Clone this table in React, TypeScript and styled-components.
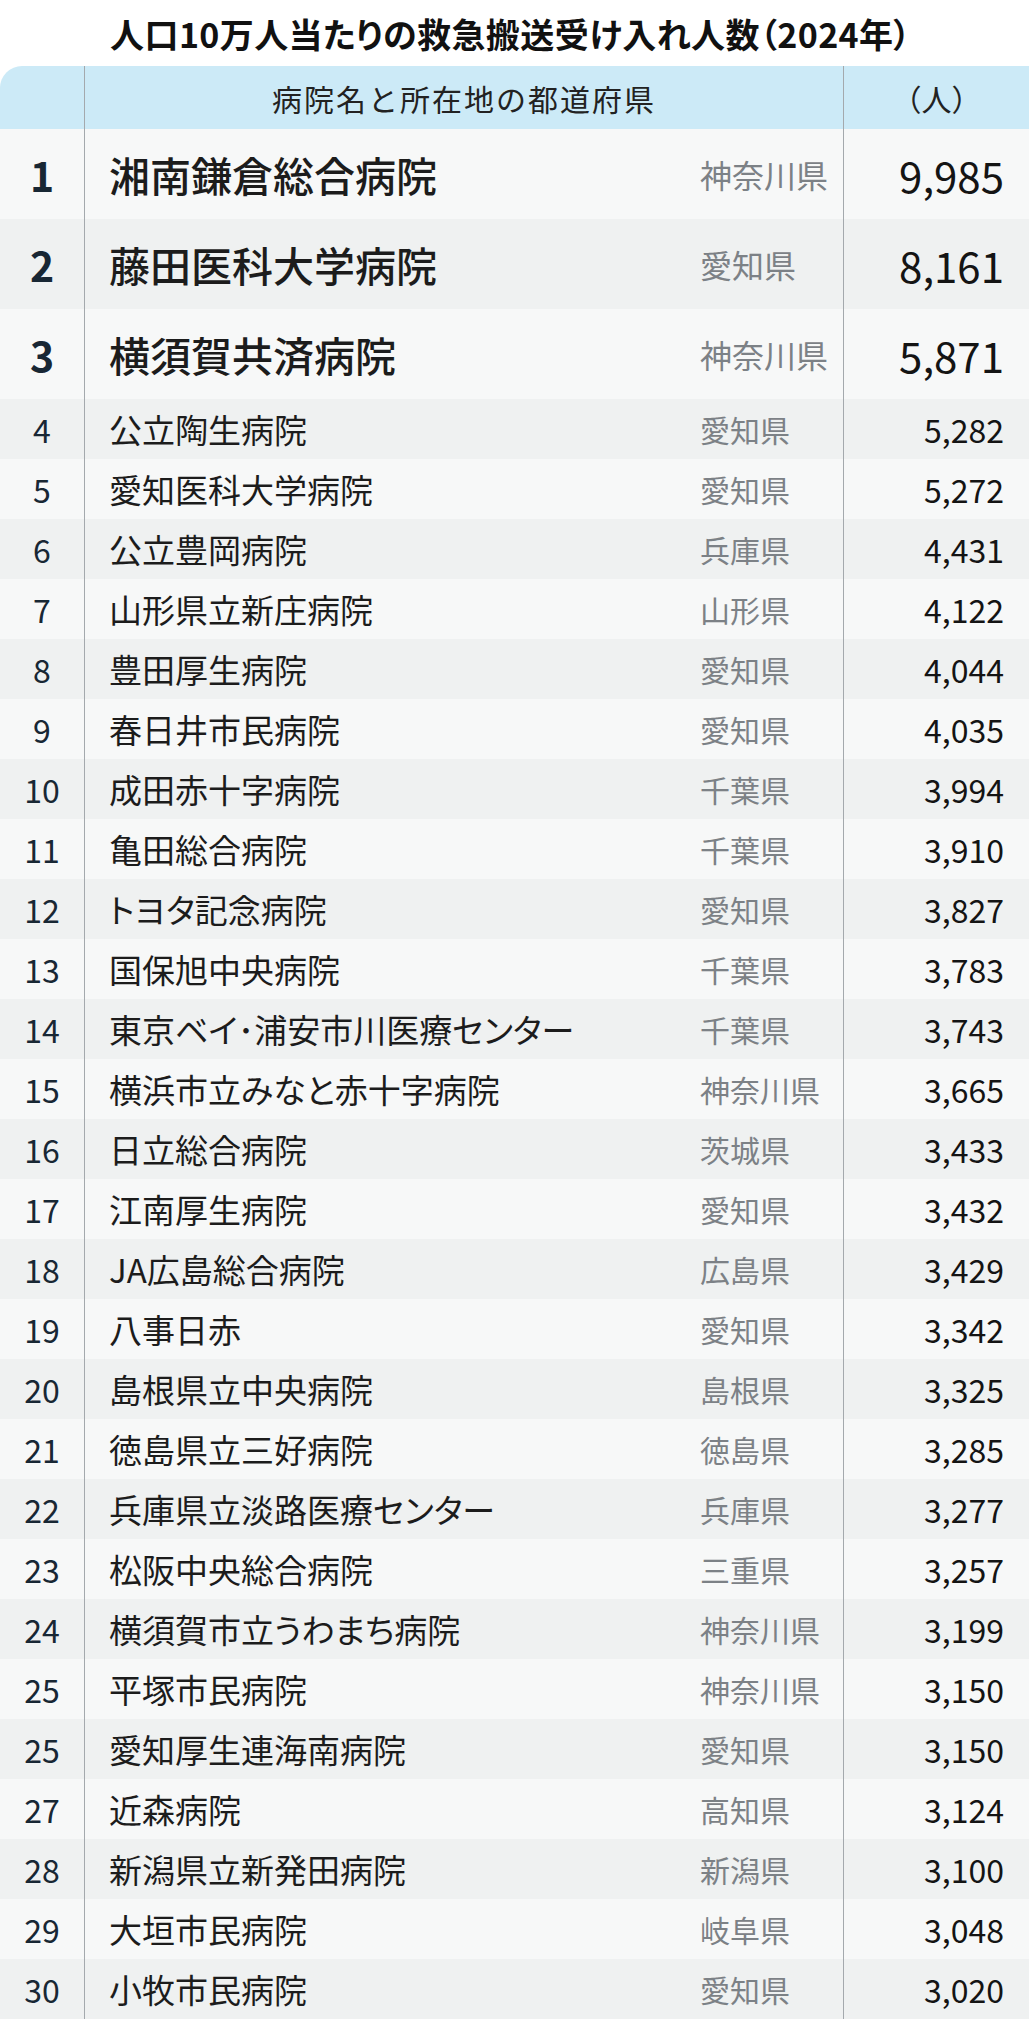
import React from 'react';
import styled, { createGlobalStyle } from 'styled-components';

const GlobalStyle = createGlobalStyle`
  html, body {
    margin: 0;
    padding: 0;
    background: #ffffff;
  }
  body {
    font-family: "Noto Sans CJK JP", "Noto Sans", sans-serif;
    color: #222;
  }
`;

type Row = { rank: number; name: string; pref: string; value: string };

const rows: Row[] = [
  { rank: 1, name: '湘南鎌倉総合病院', pref: '神奈川県', value: '9,985' },
  { rank: 2, name: '藤田医科大学病院', pref: '愛知県', value: '8,161' },
  { rank: 3, name: '横須賀共済病院', pref: '神奈川県', value: '5,871' },
  { rank: 4, name: '公立陶生病院', pref: '愛知県', value: '5,282' },
  { rank: 5, name: '愛知医科大学病院', pref: '愛知県', value: '5,272' },
  { rank: 6, name: '公立豊岡病院', pref: '兵庫県', value: '4,431' },
  { rank: 7, name: '山形県立新庄病院', pref: '山形県', value: '4,122' },
  { rank: 8, name: '豊田厚生病院', pref: '愛知県', value: '4,044' },
  { rank: 9, name: '春日井市民病院', pref: '愛知県', value: '4,035' },
  { rank: 10, name: '成田赤十字病院', pref: '千葉県', value: '3,994' },
  { rank: 11, name: '亀田総合病院', pref: '千葉県', value: '3,910' },
  { rank: 12, name: 'トヨタ記念病院', pref: '愛知県', value: '3,827' },
  { rank: 13, name: '国保旭中央病院', pref: '千葉県', value: '3,783' },
  { rank: 14, name: '東京ベイ･浦安市川医療センター', pref: '千葉県', value: '3,743' },
  { rank: 15, name: '横浜市立みなと赤十字病院', pref: '神奈川県', value: '3,665' },
  { rank: 16, name: '日立総合病院', pref: '茨城県', value: '3,433' },
  { rank: 17, name: '江南厚生病院', pref: '愛知県', value: '3,432' },
  { rank: 18, name: 'JA広島総合病院', pref: '広島県', value: '3,429' },
  { rank: 19, name: '八事日赤', pref: '愛知県', value: '3,342' },
  { rank: 20, name: '島根県立中央病院', pref: '島根県', value: '3,325' },
  { rank: 21, name: '徳島県立三好病院', pref: '徳島県', value: '3,285' },
  { rank: 22, name: '兵庫県立淡路医療センター', pref: '兵庫県', value: '3,277' },
  { rank: 23, name: '松阪中央総合病院', pref: '三重県', value: '3,257' },
  { rank: 24, name: '横須賀市立うわまち病院', pref: '神奈川県', value: '3,199' },
  { rank: 25, name: '平塚市民病院', pref: '神奈川県', value: '3,150' },
  { rank: 25, name: '愛知厚生連海南病院', pref: '愛知県', value: '3,150' },
  { rank: 27, name: '近森病院', pref: '高知県', value: '3,124' },
  { rank: 28, name: '新潟県立新発田病院', pref: '新潟県', value: '3,100' },
  { rank: 29, name: '大垣市民病院', pref: '岐阜県', value: '3,048' },
  { rank: 30, name: '小牧市民病院', pref: '愛知県', value: '3,020' },
];

const Page = styled.div`
  width: 1029px;
  display: flex;
  flex-direction: column;
`;

const Title = styled.h1`
  margin: 0;
  height: 66px;
  display: flex;
  align-items: center;
  justify-content: center;
  padding-right: 8px;
  font-size: 34px;
  font-weight: 700;
  color: #111;
  font-feature-settings: "palt";
  letter-spacing: 0.4px;
`;

const Table = styled.div`
  display: grid;
  grid-template-columns: 84px 1fr 143px 186px;
`;

const HeaderCell = styled.div<{ $span?: number; $divider?: boolean; $spacing?: number }>`
  grid-column: span ${(p) => p.$span ?? 1};
  height: 63px;
  background: #cceaf7;
  display: flex;
  align-items: center;
  justify-content: center;
  font-size: 30px;
  font-weight: 400;
  color: #222;
  letter-spacing: ${(p) => p.$spacing ?? 0}px;
  border-left: ${(p) => (p.$divider ? '1px solid #a4a9ad' : 'none')};

  &:first-child {
    border-top-left-radius: 22px;
  }
  &:last-child {
    border-top-right-radius: 22px;
  }
`;

const Cell = styled.div<{ $top: boolean; $odd: boolean }>`
  height: ${(p) => (p.$top ? 90 : 60)}px;
  background: ${(p) => (p.$odd ? '#eff1f1' : '#f7f8f8')};
  display: flex;
  align-items: center;
`;

const RankCell = styled(Cell)`
  justify-content: center;
  color: #182734;
  font-size: ${(p) => (p.$top ? 41 : 32)}px;
  font-weight: ${(p) => (p.$top ? 700 : 400)};
`;

const NameCell = styled(Cell)`
  border-left: 1px solid #a4a9ad;
  padding-left: 24px;
  font-size: ${(p) => (p.$top ? 41 : 33)}px;
  font-weight: ${(p) => (p.$top ? 500 : 400)};
  color: #1c1c1c;
  font-feature-settings: "palt";
  white-space: nowrap;
`;

const PrefCell = styled(Cell)`
  font-size: ${(p) => (p.$top ? 32 : 30)}px;
  font-weight: 400;
  color: #7c8186;
  white-space: nowrap;
`;

const ValueCell = styled(Cell)`
  border-left: 1px solid #a4a9ad;
  justify-content: flex-end;
  padding-right: 25px;
  font-size: ${(p) => (p.$top ? 42 : 32)}px;
  font-weight: 400;
  color: #141414;
`;

const App: React.FC = () => {
  return (
    <Page>
      <GlobalStyle />
      <Title>人口10万人当たりの救急搬送受け入れ人数（2024年）</Title>
      <Table>
        <HeaderCell />
        <HeaderCell $span={2} $divider $spacing={2}>
          病院名と所在地の都道府県
        </HeaderCell>
        <HeaderCell $divider>（人）</HeaderCell>
        {rows.map((r, i) => {
          const top = i < 3;
          const odd = i % 2 === 1;
          return (
            <React.Fragment key={i}>
              <RankCell $top={top} $odd={odd}>{r.rank}</RankCell>
              <NameCell $top={top} $odd={odd}>{r.name}</NameCell>
              <PrefCell $top={top} $odd={odd}>{r.pref}</PrefCell>
              <ValueCell $top={top} $odd={odd}>{r.value}</ValueCell>
            </React.Fragment>
          );
        })}
      </Table>
    </Page>
  );
};

export default App;
